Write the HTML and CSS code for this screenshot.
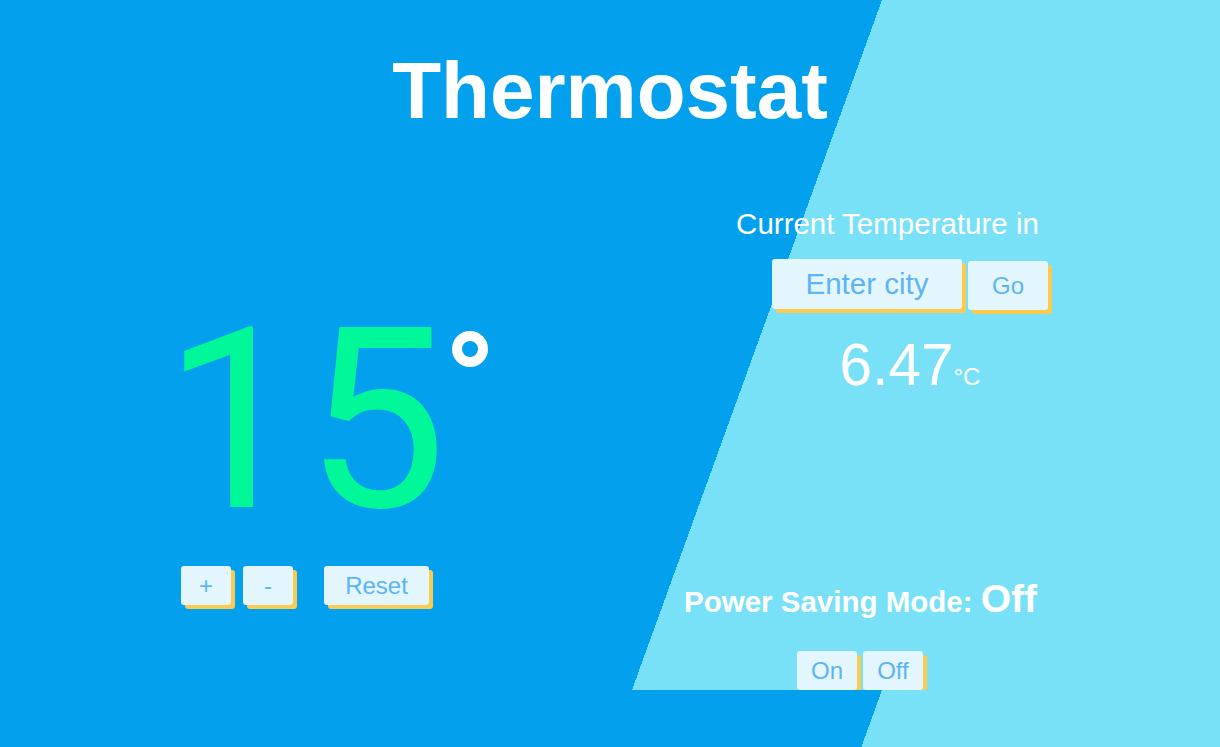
FILE: index.html
```html
<!DOCTYPE html>
<html lang="en">
<head>
<meta charset="utf-8">
<title>Thermostat</title>
<link rel="stylesheet" href="styles.css">
</head>
<body>
<h1 class="title">Thermostat</h1>
<main class="panels">
  <section class="panel panel-left">
    <div class="setpoint"><span class="setpoint-value">15<span class="degree-ring" aria-hidden="true"></span></span></div>
    <div class="controls">
      <button class="btn btn-sq">+</button>
      <button class="btn btn-sq">-</button>
      <button class="btn btn-reset">Reset</button>
    </div>
  </section>
  <section class="panel panel-right">
    <h2 class="city-heading">Current Temperature in</h2>
    <form class="city-form" onsubmit="return false">
      <input class="city-input" type="text" placeholder="Enter city">
      <button class="btn btn-go" type="submit">Go</button>
    </form>
    <div class="outside-temp">6.47<span class="unit">°C</span></div>
    <p class="power"><span class="power-label">Power Saving Mode: </span>Off</p>
    <div class="power-controls">
      <button class="btn btn-toggle">On</button>
      <button class="btn btn-toggle">Off</button>
    </div>
  </section>
</main>
</body>
</html>
```

FILE: styles.css
```css
html {
  background: linear-gradient(109.92deg, #03a0ed 60%, #79e1f7 60%) 0 0 / 100% 690px repeat-y;
}

body {
  margin: 0;
  font-family: "Liberation Sans", Arial, sans-serif;
  color: #ffffff;
}

.title {
  margin: 51px 0 0;
  font-size: 80px;
  line-height: 80px;
  font-weight: 700;
  text-align: center;
}

.panels {
  display: grid;
  grid-template-columns: 1fr 1fr;
}

.panel {
  display: flex;
  flex-direction: column;
  align-items: center;
}

/* left: set point */
.setpoint {
  margin-top: 165px;
  font-family: Roboto, "Liberation Sans", Arial, sans-serif;
  font-size: 252px;
  line-height: 250px;
  color: #01f898;
}

.setpoint-value {
  position: relative;
  display: inline-block;
}

.degree-ring {
  position: absolute;
  left: calc(100% + 5px);
  top: 35px;
  width: 16px;
  height: 16px;
  border: 10px solid #ffffff;
  border-radius: 50%;
}

.controls {
  margin-top: 20px;
  display: flex;
  gap: 12px;
}

.btn {
  height: 39px;
  padding: 0;
  border: 0;
  border-radius: 3px;
  background: #e3f6fd;
  color: #5cb4f6;
  font-family: "Liberation Sans", Arial, sans-serif;
  font-size: 24px;
  line-height: 39px;
  box-shadow: 4px 4px 0 #fdca50;
  cursor: pointer;
}

.btn-sq {
  width: 50px;
}

.btn-reset {
  width: 105px;
  margin-left: 19px;
}

/* right: outside temperature */
.city-heading {
  margin: 77.5px 55px 0 0;
  font-size: 29.5px;
  line-height: 29.5px;
  font-weight: 400;
}

.city-form {
  margin: 20.5px 10px 0 0;
  display: flex;
  align-items: flex-start;
  gap: 6px;
}

.city-input {
  box-sizing: border-box;
  width: 190px;
  height: 50px;
  padding: 0;
  border: 0;
  border-radius: 3px;
  background: #e3f6fd;
  color: #5cb4f6;
  font-family: "Liberation Sans", Arial, sans-serif;
  font-size: 29.5px;
  text-align: center;
  box-shadow: 4px 4px 0 #fdca50;
  outline: none;
}

.city-input::placeholder {
  color: #5cb4f6;
  opacity: 1;
}

.btn-go {
  width: 80px;
  height: 49px;
  line-height: 49px;
  margin-top: 2px;
}

.outside-temp {
  margin: 26px 10px 0 0;
  font-size: 58.5px;
  line-height: 58px;
}

.unit {
  font-size: 24px;
  line-height: 1;
}

.power {
  margin: 185.5px 109px 0 0;
  font-size: 39px;
  line-height: 40px;
  font-weight: 700;
}

.power-label {
  font-size: 29.5px;
  line-height: 1;
}

.power-controls {
  margin: 31.5px 110px 0 0;
  display: flex;
  gap: 6px;
}

.btn-toggle {
  width: 60px;
}
```
